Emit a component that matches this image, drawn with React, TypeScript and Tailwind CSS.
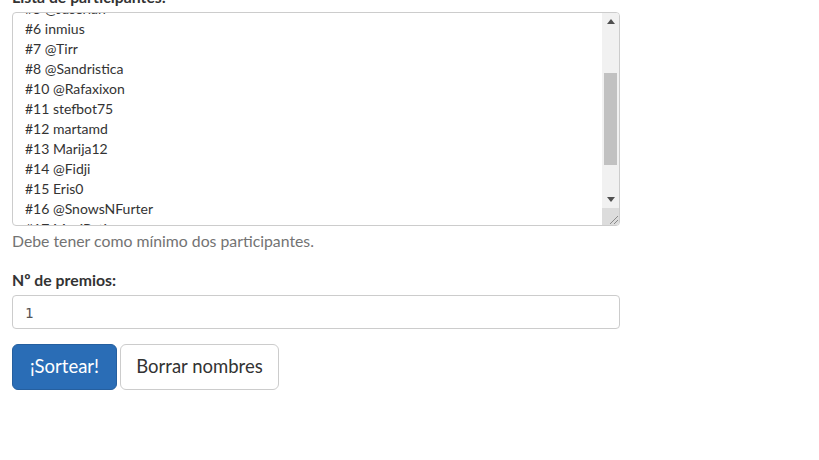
import React from "react";

const names = [
  "#5 @Jaserian",
  "#6 inmius",
  "#7 @Tirr",
  "#8 @Sandristica",
  "#10 @Rafaxixon",
  "#11 stefbot75",
  "#12 martamd",
  "#13 Marija12",
  "#14 @Fidji",
  "#15 Eris0",
  "#16 @SnowsNFurter",
  "#17 MaxiPetit",
];

export default function App() {
  return (
    <div className="w-[819px] h-[460px] overflow-hidden bg-white text-[#333333]" style={{ fontFamily: "Lato, 'Noto Sans', sans-serif" }}>
      <div className="pl-[12px] w-[620px]">
        <div className="mt-[-13px] mb-[5px] text-[15.8px] leading-[20px] font-bold">Lista de participantes:</div>
        <div className="h-[214px] border border-[#cccccc] rounded-[4px] flex overflow-hidden">
          <div className="flex-1 overflow-hidden px-[12px]">
            <div className="mt-[-14px] text-[14px] leading-[20px]">
              {names.map((n) => (
                <div key={n}>{n}</div>
              ))}
            </div>
          </div>
          <div className="w-[17px] bg-[#f1f1f1] flex flex-col">
            <div className="h-[17px] flex items-center justify-center">
              <svg width="8" height="5" viewBox="0 0 8 5"><path d="M0 5 L4 0 L8 5 Z" fill="#505050" /></svg>
            </div>
            <div className="h-[43px]" />
            <div className="mx-[2px] h-[92px] bg-[#c1c1c1]" />
            <div className="flex-1" />
            <div className="h-[17px] flex items-center justify-center">
              <svg width="8" height="5" viewBox="0 0 8 5"><path d="M0 0 L8 0 L4 5 Z" fill="#505050" /></svg>
            </div>
            <div className="h-[17px] bg-[#dcdcdc] flex items-end justify-end">
              <svg width="12" height="12" viewBox="0 0 12 12">
                <path d="M11 3 L3 11 M11 7 L7 11" stroke="#8a8a8a" strokeWidth="1" />
              </svg>
            </div>
          </div>
        </div>
        <div className="mt-[5px] mb-[19px] text-[15.8px] leading-[20px] text-[#737373]">Debe tener como mínimo dos participantes.</div>
        <div className="mb-[5px] text-[15.8px] leading-[20px] font-bold">Nº de premios:</div>
        <div className="h-[34px] border border-[#cccccc] rounded-[4px] flex items-center px-[12px] text-[14px] text-[#555555]" style={{ fontFamily: "'DejaVu Sans Mono', monospace" }}>
          <span className="mt-[2px]">1</span>
        </div>
        <div className="mt-[15px] flex gap-[3px]">
          <button className="h-[46px] w-[105px] rounded-[6px] bg-[#2a6db6] border border-[#255f9f] text-white text-[18.5px]">¡Sortear!</button>
          <button className="h-[46px] w-[159px] rounded-[6px] bg-white border border-[#cccccc] text-[#333333] text-[18.5px]">Borrar nombres</button>
        </div>
      </div>
    </div>
  );
}
